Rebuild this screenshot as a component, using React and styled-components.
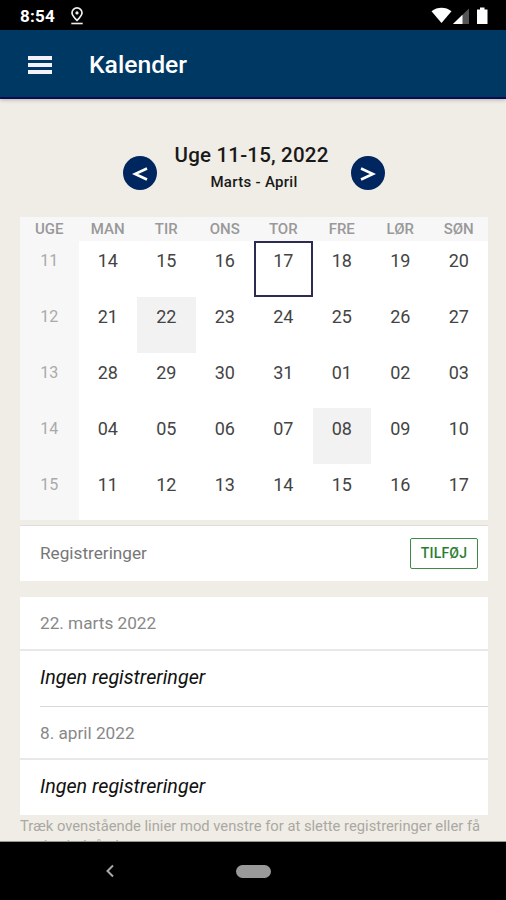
import styled, { createGlobalStyle } from "styled-components";

const ugedage = ["UGE", "MAN", "TIR", "ONS", "TOR", "FRE", "LØR", "SØN"];

const uger = [
    { uge: "11", dage: ["14", "15", "16", "17", "18", "19", "20"], idag: 3 },
    { uge: "12", dage: ["21", "22", "23", "24", "25", "26", "27"], valgt: 1 },
    { uge: "13", dage: ["28", "29", "30", "31", "01", "02", "03"] },
    { uge: "14", dage: ["04", "05", "06", "07", "08", "09", "10"], valgt: 4 },
    { uge: "15", dage: ["11", "12", "13", "14", "15", "16", "17"] },
];

export default function App() {
    return (
        <Container>
            <GlobalStyle />
            <StatusBar>
                <Clock>8:54</Clock>
                <svg width="14" height="18" viewBox="0 0 14 18" fill="none" stroke="#eee">
                    <path d="M7 13.4C4 10.300 2 8.200 2 5.900a5 5 0 0 1 10 0c0 2.300-2 4.400-5 7.500z" strokeWidth="1.700" />
                    <circle cx="7" cy="5.900" r="1.600" fill="#eee" stroke="none" />
                    <path d="M1.300 16.500h11.400" strokeWidth="1.600" />
                </svg>
                <Spacer />
                <svg width="58" height="18" viewBox="0 0 58 18">
                    <path d="M.5 4.200C6.500-.4 14.500-.4 20.500 4.200L10.500 16z" fill="#fff" />
                    <path d="M38 1.500V17H22z" fill="#555" />
                    <path d="M31.500 7.800V17H22z" fill="#fff" />
                    <path d="M46 2.500h3V.5h4.500v2H56.500V17H46z" fill="#fff" />
                </svg>
            </StatusBar>
            <Header>
                <MenuButton>
                    <span />
                    <span />
                    <span />
                </MenuButton>
                <h1>Kalender</h1>
            </Header>
            <Content>
                <Periode>
                    <RoundButton>
                        <svg width="18" height="18" viewBox="0 0 18 18">
                            <path d="M16 4.500L4 10l12 5.500" />
                        </svg>
                    </RoundButton>
                    <PeriodeTekst>
                        <h2>Uge 11-15, 2022</h2>
                        <p>Marts - April</p>
                    </PeriodeTekst>
                    <RoundButton>
                        <svg width="18" height="18" viewBox="0 0 18 18">
                            <path d="M2 4.500L14 10l-12 5.500" />
                        </svg>
                    </RoundButton>
                </Periode>

                <Kalender>
                    <Ugedage>
                        {ugedage.map((dag) => (
                            <span key={dag}>{dag}</span>
                        ))}
                    </Ugedage>
                    {uger.map((u) => (
                        <Uge key={u.uge}>
                            <UgeNummer>{u.uge}</UgeNummer>
                            {u.dage.map((dag, i) => (
                                <Dag key={dag} $idag={u.idag === i} $valgt={u.valgt === i}>
                                    {dag}
                                </Dag>
                            ))}
                        </Uge>
                    ))}
                </Kalender>

                <Registreringer>
                    <p>Registreringer</p>
                    <AddButton>TILFØJ</AddButton>
                </Registreringer>

                <Liste>
                    <Dato>22. marts 2022</Dato>
                    <Item $line>Ingen registreringer</Item>
                    <Dato>8. april 2022</Dato>
                    <Item>Ingen registreringer</Item>
                </Liste>
                <Hint>
                    Træk ovenstående linier mod venstre for at slette registreringer eller få
                    <br />
                    at vise indgåede
                </Hint>
            </Content>
            <NavBar>
                <svg width="10" height="14" viewBox="0 0 10 14" fill="none" stroke="#aaa" strokeWidth="2">
                    <path d="M8 1.500L2.500 7 8 12.500" />
                </svg>
                <HomePill />
            </NavBar>
        </Container>
    );
}

const GlobalStyle = createGlobalStyle`
    * {
        box-sizing: border-box;
        margin: 0;
        padding: 0;
    }
    body {
        background: #000;
        font-family: Roboto, sans-serif;
    }
`;

const Container = styled.div`
    width: 506px;
    height: 900px;
    display: flex;
    flex-direction: column;
    overflow: hidden;
    background: #f0ede6;
`;

const StatusBar = styled.div`
    height: 30px;
    flex-shrink: 0;
    display: flex;
    align-items: center;
    padding: 1px 17px 0 20px;
    background: #000;
`;

const Clock = styled.div`
    width: 50px;
    color: #fff;
    font-size: 17px;
    font-weight: 700;
    letter-spacing: 0.2px;
    line-height: 20px;
`;

const Spacer = styled.div`
    flex: 1;
`;

const Header = styled.header`
    height: 69px;
    flex-shrink: 0;
    display: flex;
    align-items: center;
    padding: 2px 28px 0;
    background: #003864;
    border-bottom: 2px solid #0c0a52;
    box-shadow: 0 1px 4px rgba(0, 0, 0, 0.25);
    h1 {
        margin-left: 37px;
        color: #fff;
        font-size: 24.7px;
        font-weight: 500;
        line-height: 30px;
    }
`;

const MenuButton = styled.div`
    width: 24px;
    display: flex;
    flex-direction: column;
    gap: 3px;
    span {
        height: 4px;
        background: #f4f1fa;
    }
`;

const Content = styled.main`
    height: 743px;
    flex-shrink: 0;
    padding: 0 18px 0 20px;
    overflow: hidden;
    border-bottom: 1px solid #999690;
`;

const Periode = styled.div`
    height: 118px;
    display: flex;
    justify-content: space-between;
    padding: 43px 103px 0;
`;

const PeriodeTekst = styled.div`
    color: #191919;
    text-align: center;
    white-space: nowrap;
    h2 {
        margin-left: -5px;
        font-size: 20.5px;
        font-weight: 500;
        letter-spacing: 0.2px;
        line-height: 26px;
    }
    p {
        margin-top: 4px;
        font-size: 15px;
        font-weight: 500;
        letter-spacing: 0.3px;
        line-height: 20px;
    }
`;

const RoundButton = styled.div`
    width: 34px;
    height: 34px;
    margin-top: 14px;
    display: flex;
    align-items: center;
    justify-content: center;
    border-radius: 50%;
    background: #00265f;
    path {
        fill: none;
        stroke: #fff;
        stroke-width: 2.5;
    }
`;

const Kalender = styled.section`
    height: 303px;
    background: #fff;
`;

const Ugedage = styled.div`
    height: 24px;
    display: grid;
    grid-template-columns: repeat(8, 1fr);
    background: #f7f7f7;
    color: #999;
    font-size: 15px;
    font-weight: 500;
    line-height: 24px;
    text-align: center;
`;

const Uge = styled.div`
    height: 55.8px;
    display: grid;
    grid-template-columns: repeat(8, 1fr);
    text-align: center;
`;

const UgeNummer = styled.div`
    padding-top: 10.4px;
    background: #f7f7f7;
    color: #aaa;
    font-size: 16px;
    line-height: 20px;
`;

const Dag = styled.div`
    padding-top: ${(props) => (props.$idag ? 7.4 : 9.4)}px;
    border: ${(props) => (props.$idag ? "2px solid #2c2b52" : "none")};
    background: ${(props) => (props.$valgt ? "#f2f2f2" : "#fff")};
    color: #444;
    font-size: 18px;
    line-height: 21px;
`;

const Registreringer = styled.section`
    height: 56px;
    margin-top: 5px;
    display: flex;
    align-items: center;
    justify-content: space-between;
    padding: 0 10px 0 20px;
    border-top: 1px solid #dedddb;
    background: #fff;
    p {
        margin-top: -2px;
        color: #777;
        font-size: 17.2px;
        line-height: 22px;
    }
`;

const AddButton = styled.div`
    width: 68px;
    height: 31px;
    border: 1px solid #3f8a45;
    border-radius: 2px;
    color: #2c7d34;
    font-size: 14px;
    font-weight: 500;
    letter-spacing: 0.2px;
    line-height: 29px;
    text-align: center;
`;

const Liste = styled.section`
    height: 218px;
    margin-top: 16px;
    background: #fff;
`;

const Dato = styled.div`
    height: 53.5px;
    padding-left: 20px;
    border-bottom: 2px solid #e8e8e8;
    color: #888;
    font-size: 17.2px;
    line-height: 53px;
`;

const Item = styled.div`
    height: 56px;
    margin-left: 20px;
    border-bottom: ${(props) => (props.$line ? "1px solid #d8d8d8" : "none")};
    color: #111;
    font-size: 19.7px;
    font-style: italic;
    line-height: 54.5px;
`;

const Hint = styled.p`
    padding-top: 1px;
    color: #aaa8a3;
    font-size: 14.77px;
    line-height: 20px;
    white-space: nowrap;
`;

const NavBar = styled.nav`
    flex: 1;
    display: flex;
    align-items: center;
    padding-left: 105px;
    background: #000;
`;

const HomePill = styled.div`
    width: 35px;
    height: 13px;
    margin-left: 121px;
    border-radius: 7px;
    background: #999;
`;
